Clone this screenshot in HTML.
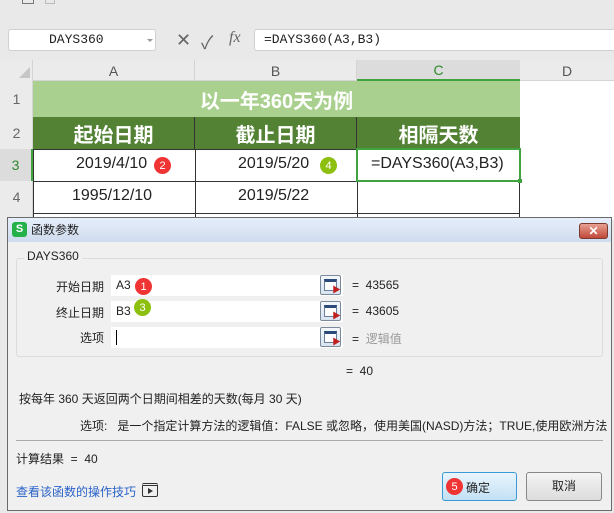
<!DOCTYPE html>
<html><head><meta charset="utf-8"><style>
*{margin:0;padding:0;box-sizing:border-box}
body{width:614px;height:513px;overflow:hidden;background:#e9e9e9;font-family:"Liberation Sans","Noto Sans CJK SC",sans-serif;position:relative;font-size:13px;color:#222}
.a{position:absolute}
.cell{position:absolute;display:flex;align-items:center;justify-content:center}
.badge{position:absolute;width:17px;height:17px;border-radius:50%;color:#fff;font-size:11px;display:flex;align-items:center;justify-content:center}
.red{background:#f03434}.grn{background:#8cbf0e}
.ref{position:absolute;width:21px;height:20px;border:1px solid #7a8a9a;border-radius:2px;background:linear-gradient(#f4f8fc,#d8e4f0)}
.ref i{position:absolute;left:3px;top:3px;width:13px;height:12px;background:#fff;border:1px solid #6a7f99;border-top:3px solid #2a4a7a}
.ref b{position:absolute;left:10px;top:9px;width:0;height:0;border-left:4px solid transparent;border-right:4px solid transparent;border-bottom:7px solid #c02020;transform:rotate(-30deg)}
.d{font-size:16px}
</style></head><body>
<div class="a" style="left:22px;top:0;width:12px;height:4px;border:1px solid #777;border-top:none"></div>
<div class="a" style="left:45px;top:0;width:10px;height:4px;border:1px solid #bbb;border-top:none"></div>
<div class="a" style="left:8px;top:29px;width:148px;height:22px;background:#fff;border:1px solid #d0d0d0;border-radius:3px;font-family:'Liberation Mono',monospace;font-size:13px;line-height:20px;padding-left:40px">DAYS360</div>
<div class="a" style="left:147px;top:39px;border-left:3px solid transparent;border-right:3px solid transparent;border-top:3px solid #999"></div>
<div class="a" style="left:176px;top:30px;font-size:18px;color:#666">✕</div>
<div class="a" style="left:201px;top:29px;font-size:18px;color:#666">✓</div>
<div class="a" style="left:229px;top:29px;font-size:16px;color:#666;font-style:italic;font-family:'Liberation Serif',serif">fx</div>
<div class="a" style="left:254px;top:29px;width:370px;height:22px;background:#fff;border:1px solid #d0d0d0;border-radius:3px;font-family:'Liberation Mono','Noto Sans CJK SC',monospace;font-size:13px;line-height:20px;padding-left:9px">=DAYS360(A3,B3)</div>
<div class="a" style="left:0;top:60px;width:614px;height:160px;background:#fff"></div>
<div class="a" style="left:0;top:60px;width:614px;height:21px;background:#ebebeb;border-bottom:1px solid #d4d4d4"></div>
<div class="a" style="left:0;top:60px;width:33px;height:160px;background:#ebebeb;border-right:1px solid #d4d4d4"></div>
<div class="a" style="left:19px;top:67px;border-left:11px solid transparent;border-bottom:11px solid #c6c6c6"></div>
<div class="cell" style="left:33px;top:60px;width:162px;height:21px;color:#555;font-size:14px;border-right:1px solid #d4d4d4">A</div>
<div class="cell" style="left:195px;top:60px;width:162px;height:21px;color:#555;font-size:14px;border-right:1px solid #d4d4d4">B</div>
<div class="cell" style="left:357px;top:60px;width:163px;height:21px;color:#2d8a2d;font-size:14px;background:#dcdcdc;border-bottom:2px solid #3fa33f">C</div>
<div class="cell" style="left:520px;top:60px;width:94px;height:21px;color:#555;font-size:14px">D</div>
<div class="cell" style="left:0;top:81px;width:33px;height:36px;color:#666;font-size:14px">1</div>
<div class="cell" style="left:0;top:117px;width:33px;height:32px;color:#666;font-size:14px">2</div>
<div class="cell" style="left:0;top:149px;width:33px;height:32px;color:#2d8a2d;font-size:14px;background:#dcdcdc;border-right:2px solid #3fa33f">3</div>
<div class="cell" style="left:0;top:181px;width:33px;height:32px;color:#666;font-size:14px">4</div>
<div class="cell" style="left:33px;top:81px;width:487px;height:36px;background:#a9d08e;color:#fff;font-weight:bold;font-size:20px">以一年360天为例</div>
<div class="a" style="left:33px;top:117px;width:487px;height:32px;background:#548235"></div>
<div class="cell" style="left:33px;top:117px;width:162px;height:32px;color:#fff;font-weight:bold;font-size:20px;border-right:1px solid #333">起始日期</div>
<div class="cell" style="left:195px;top:117px;width:162px;height:32px;color:#fff;font-weight:bold;font-size:20px;border-right:1px solid #333">截止日期</div>
<div class="cell" style="left:357px;top:117px;width:163px;height:32px;color:#fff;font-weight:bold;font-size:20px">相隔天数</div>
<div class="a" style="left:33px;top:149px;width:487px;height:70px;border-left:1px solid #333;border-right:1px solid #333"></div>
<div class="a" style="left:33px;top:149px;width:487px;height:1px;background:#333"></div>
<div class="a" style="left:33px;top:181px;width:487px;height:1px;background:#333"></div>
<div class="a" style="left:33px;top:213px;width:487px;height:1px;background:#333"></div>
<div class="a" style="left:195px;top:149px;width:1px;height:70px;background:#333"></div>
<div class="a" style="left:357px;top:149px;width:1px;height:70px;background:#333"></div>
<div class="a d" style="left:76px;top:155px">2019/4/10</div>
<div class="badge red" style="left:154px;top:157px">2</div>
<div class="a d" style="left:238px;top:155px">2019/5/20</div>
<div class="badge grn" style="left:320px;top:157px">4</div>
<div class="a" style="left:356px;top:148px;width:165px;height:34px;border:2px solid #3fa33f"></div>
<div class="a" style="left:518px;top:179px;width:4px;height:4px;background:#3fa33f"></div>
<div class="a d" style="left:371px;top:155px">=DAYS360(A3,B3)</div>
<div class="a d" style="left:72px;top:187px">1995/12/10</div>
<div class="a d" style="left:238px;top:187px">2019/5/22</div>
<div class="a" style="left:7px;top:217px;width:605px;height:294px;background:#f0f0f0;border:1px solid #6a6a6a"></div>
<div class="a" style="left:8px;top:218px;width:603px;height:24px;background:linear-gradient(#e6eefa,#cfdcee)"></div>
<div class="a" style="left:12px;top:222px;width:15px;height:15px;background:#25b14a;border-radius:3px;color:#fff;font-size:11px;font-weight:bold;text-align:center;line-height:15px">S</div>
<div class="a" style="left:31px;top:221px;font-size:12px">函数参数</div>
<div class="a" style="left:579px;top:223px;width:29px;height:16px;background:linear-gradient(#e8a090,#c0483a);border:1px solid #7a3a30;border-radius:3px;color:#fff;font-size:12px;font-weight:bold;text-align:center;line-height:14px">✕</div>
<div class="a" style="left:16px;top:258px;width:587px;height:99px;border:1px solid #dcdcdc;border-radius:3px"></div>
<div class="a" style="left:24px;top:249px;background:#f0f0f0;padding:0 3px;font-size:12px">DAYS360</div>
<div class="a" style="left:56px;top:278px;font-size:12px">开始日期</div>
<div class="a" style="left:111px;top:275px;width:232px;height:21px;background:#fff"></div>
<div class="a" style="left:116px;top:278px;font-size:12px">A3</div>
<div class="badge red" style="left:135px;top:278px">1</div>
<div class="ref" style="left:320px;top:275px"><i></i><b></b></div>
<div class="a" style="left:352px;top:278px;font-size:12px">=&nbsp; 43565</div>
<div class="a" style="left:56px;top:304px;font-size:12px">终止日期</div>
<div class="a" style="left:111px;top:301px;width:232px;height:21px;background:#fff"></div>
<div class="a" style="left:116px;top:304px;font-size:12px">B3</div>
<div class="badge grn" style="left:134px;top:299px">3</div>
<div class="ref" style="left:320px;top:301px"><i></i><b></b></div>
<div class="a" style="left:352px;top:304px;font-size:12px">=&nbsp; 43605</div>
<div class="a" style="left:80px;top:329px;font-size:12px">选项</div>
<div class="a" style="left:111px;top:327px;width:232px;height:21px;background:#fff"></div>
<div class="a" style="left:116px;top:330px;width:1px;height:15px;background:#000"></div>
<div class="ref" style="left:320px;top:327px"><i></i><b></b></div>
<div class="a" style="left:352px;top:330px;font-size:12px">=&nbsp; <span style="color:#999">逻辑值</span></div>
<div class="a" style="left:346px;top:364px;font-size:12px">=&nbsp; 40</div>
<div class="a" style="left:19px;top:390px;font-size:12px">按每年 360 天返回两个日期间相差的天数(每月 30 天)</div>
<div class="a" style="left:80px;top:417px;font-size:12px;white-space:nowrap">选项:&nbsp;&nbsp; 是一个指定计算方法的逻辑值：FALSE 或忽略，使用美国(NASD)方法；TRUE,使用欧洲方法</div>
<div class="a" style="left:16px;top:440px;width:587px;height:1px;background:#aaa"></div>
<div class="a" style="left:16px;top:450px;font-size:12px">计算结果 &nbsp;= &nbsp;40</div>
<div class="a" style="left:16px;top:483px;font-size:12px;color:#2a62c9">查看该函数的操作技巧</div>
<div class="a" style="left:142px;top:483px;width:16px;height:14px;border:1px solid #333;border-radius:2px;border-top:3px double #333"></div>
<div class="a" style="left:148px;top:488px;border-top:3px solid transparent;border-bottom:3px solid transparent;border-left:5px solid #333"></div>
<div class="a" style="left:442px;top:472px;width:75px;height:29px;border:1px solid #3a9ad8;border-radius:3px;background:linear-gradient(#eaf5fd,#c2e0f5)"></div>
<div class="badge red" style="left:446px;top:478px">5</div>
<div class="a" style="left:466px;top:479px;font-size:12px">确定</div>
<div class="a" style="left:526px;top:472px;width:76px;height:29px;border:1px solid #888;border-radius:3px;background:linear-gradient(#f4f4f4,#dcdcdc);font-size:12px;text-align:center;line-height:27px">取消</div>
</body></html>
